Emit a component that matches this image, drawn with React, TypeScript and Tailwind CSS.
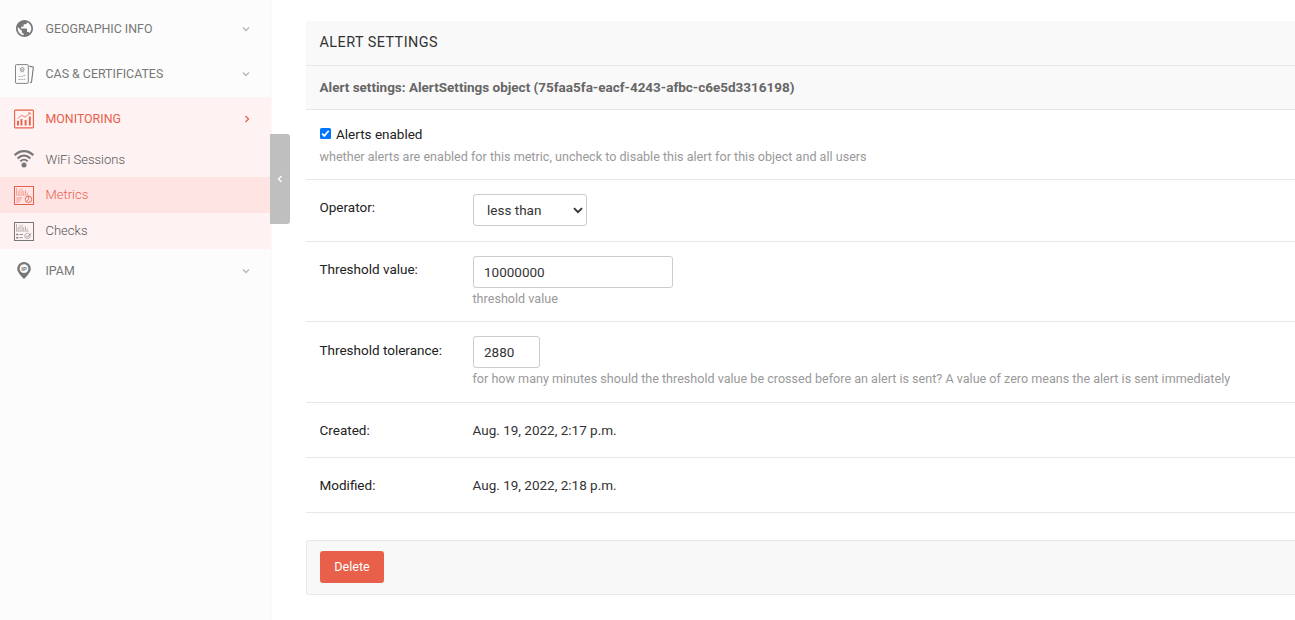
import type { ReactNode } from 'react';

function GlobeIcon() {
  return (
    <svg viewBox="2 2 20 20" className="h-[17px] w-[17px]" fill="currentColor">
      <path d="M12 2C6.48 2 2 6.48 2 12s4.48 10 10 10 10-4.48 10-10S17.52 2 12 2zm-1 17.93c-3.95-.49-7-3.85-7-7.93 0-.62.08-1.21.21-1.79L9 15v1c0 1.1.9 2 2 2v1.93zm6.9-2.54c-.26-.81-1-1.39-1.9-1.39h-1v-3c0-.55-.45-1-1-1H8v-2h2c.55 0 1-.45 1-1V7h2c1.1 0 2-.9 2-2v-.41c2.93 1.19 5 4.06 5 7.41 0 2.08-.8 3.97-2.1 5.39z" />
    </svg>
  );
}

function CertificateIcon() {
  return (
    <svg viewBox="0 0 20 20" className="h-5 w-5" fill="none" stroke="currentColor">
      <rect x="1.5" y="0.6" width="12.8" height="18.8" rx="1" strokeWidth="0.9" />
      <path d="M15.4 2.4l3.4.4a.6.6 0 0 1 .5.7L17.5 18.2l-1.6.3" strokeWidth="1.1" />
      <circle cx="8.2" cy="5.4" r="1.9" strokeWidth="0.8" />
      <path d="M7.4 5.3l.7.7 1.1-1.2M7.2 7.3v1M9.2 7.3v1" strokeWidth="0.6" />
      <path d="M4.5 12.4h1.3M6.5 12.4h2.2M9.2 11.4h2M4.5 15.5h2M7.3 15.5h1.5M9.5 15.3h1.8" strokeWidth="0.9" opacity="0.7" />
    </svg>
  );
}

function MonitoringIcon() {
  return (
    <svg viewBox="0 0 20 20" className="h-5 w-5" fill="none" stroke="currentColor">
      <rect x="0.6" y="1.1" width="18.8" height="17.8" rx="1" strokeWidth="1.1" />
      <path d="M4 16.5v-4.7M7.4 16.5v-6.5M11.6 16.5v-5.5M15.8 16.5v-9" strokeWidth="1.9" />
      <path d="M3.6 9.6l3.9-3.4 3.7 1.9 4.6-4" strokeWidth="0.8" />
      <path d="M14.3 3.8h1.9v1.9" strokeWidth="0.8" />
    </svg>
  );
}

function WifiIcon() {
  return (
    <svg viewBox="0 0 20 20" className="h-5 w-5" fill="none" stroke="currentColor">
      <path d="M0.7 6.2C6 .7 14 .7 19.3 6.2" strokeWidth="2.2" />
      <path d="M3.6 9.4c3.8-3.9 9-3.9 12.8 0" strokeWidth="2.1" />
      <path d="M6.3 12.4c2.2-2.2 5.2-2.2 7.4 0" strokeWidth="2" />
      <circle cx="10" cy="16.1" r="2.5" fill="currentColor" stroke="none" />
    </svg>
  );
}

function PanelIcon({ checks = false }: { checks?: boolean }) {
  return (
    <svg viewBox="0 0 20 20" className="h-5 w-5" fill="none" stroke="currentColor">
      <rect x="0.5" y="1.5" width="19" height="18" strokeWidth="1" />
      <path d="M2.5 3v7M4.3 6v4M6 4v6M8 3.5v6.5M9.7 6v4M11.5 5v5M13.2 7.5v2.5" strokeWidth="0.8" opacity="0.6" />
      <path d="M2 10.4h13" strokeWidth="0.6" opacity="0.5" />
      {checks ? (
        <>
          <path d="M2.3 13.5h2M2.3 16.7h2" strokeWidth="1.5" />
          <path d="M5.5 13.5h3.5M5.5 16.7h3" strokeWidth="0.8" />
          <circle cx="13.4" cy="15" r="2.7" strokeWidth="0.7" opacity="0.7" />
          <path d="M12 14.8l1.3 1.3 4-3.6" strokeWidth="0.8" />
        </>
      ) : (
        <>
          <path d="M2.3 13h6M2.3 15h4.6M2.3 17h3" strokeWidth="0.9" opacity="0.7" />
          <circle cx="14.5" cy="14.3" r="3.2" strokeWidth="0.9" />
          <path d="M14.5 11.3v3.1l-1.8 2.2" strokeWidth="0.8" />
        </>
      )}
    </svg>
  );
}

function PinIcon() {
  return (
    <svg viewBox="0 0 14 17" className="h-[17px] w-[14px]">
      <path d="M7 0a6.8 6.8 0 0 0-6.8 6.8C.2 11 7 17 7 17s6.8-6 6.8-10.2A6.8 6.8 0 0 0 7 0z" fill="currentColor" />
      <circle cx="7" cy="6.7" r="4.4" fill="#fcfcfc" />
      <text x="7" y="8.9" textAnchor="middle" fontSize="6" fontWeight="700" fill="currentColor">IP</text>
    </svg>
  );
}

function Chevron({ className }: { className: string }) {
  return (
    <svg viewBox="0 0 8 8" className={className} fill="none" stroke="currentColor" strokeWidth="1.3">
      <path d="M1 2.5l3 3 3-3" />
    </svg>
  );
}

function MenuRow({ icon, label, className, labelClass = 'pt-px', chevron }: { icon: ReactNode; label: string; className: string; labelClass?: string; chevron?: ReactNode }) {
  return (
    <div className={`flex items-center pl-3.5 pr-[21px] ${className}`}>
      <span className="flex w-5 shrink-0 justify-center">{icon}</span>
      <span className={`ml-[11.5px] flex-1 whitespace-nowrap ${labelClass}`}>{label}</span>
      {chevron}
    </div>
  );
}

function Row({ label, className, labelClass = 'pt-[17px]', children }: { label: string; className: string; labelClass?: string; children: ReactNode }) {
  return (
    <div className={`flex border-b border-[#e8e8e8] pl-[13.5px] ${className}`}>
      <div className={`w-[153px] shrink-0 leading-5 text-[#222] ${labelClass}`}>{label}</div>
      <div className="whitespace-nowrap">{children}</div>
    </div>
  );
}

export default function App() {
  return (
    <div className="relative flex h-[620px] w-full overflow-hidden bg-white font-['Roboto',sans-serif] text-[13.5px] text-[#333]">
      <nav className="w-[272px] shrink-0 border-r border-[#f9f9f9] bg-[#fcfcfc] text-[13px] text-[#777] opacity-[.999]">
        <MenuRow className="mt-1.5 h-[45px] text-[12.4px]" icon={<GlobeIcon />} label="GEOGRAPHIC INFO" chevron={<Chevron className="h-2 w-2 text-[#b5b5b5]" />} />
        <MenuRow className="h-[45px] text-[12.4px]" icon={<CertificateIcon />} label="CAS & CERTIFICATES" chevron={<Chevron className="h-2 w-2 text-[#b5b5b5]" />} />
        <div className="mt-px h-[152px] w-[271px] bg-[#fff2f2]">
          <MenuRow className="h-[43px] text-[12.4px] text-[#e8604a]" icon={<MonitoringIcon />} label="MONITORING" chevron={<Chevron className="h-2 w-2 translate-x-px -rotate-90" />} />
          <MenuRow className="h-[37px] font-light" labelClass="pt-0.5 text-[#555]" icon={<WifiIcon />} label="WiFi Sessions" />
          <MenuRow className="h-9 bg-[#ffe4e4] font-light text-[#e8604a]" labelClass="pb-px" icon={<PanelIcon />} label="Metrics" />
          <MenuRow className="h-9 font-light" labelClass="pb-px text-[#555]" icon={<PanelIcon checks />} label="Checks" />
        </div>
        <MenuRow className="h-[43px] text-[12.4px]" icon={<PinIcon />} label="IPAM" chevron={<Chevron className="h-2 w-2 text-[#b5b5b5]" />} />
      </nav>
      <button className="absolute left-[270px] top-[134px] flex h-[90px] w-5 items-center justify-center rounded-r-[3px] bg-[#bfbfbf] text-white">
        <Chevron className="h-2 w-2 rotate-90" />
      </button>

      <main className="ml-[34px] min-w-0 flex-1 pt-[21px]">
        <h2 className="h-[45px] border-b border-[#e8e8e8] bg-[#f9f9f9] pl-[13.5px] text-[14.4px] leading-[44px] tracking-[0.45px]">ALERT SETTINGS</h2>
        <h3 className="h-11 border-b border-[#e8e8e8] bg-[#f9f9f9] pl-[13.5px] text-[13.5px] font-bold leading-[43px] text-[#666]">Alert settings: AlertSettings object (75faa5fa-eacf-4243-afbc-c6e5d3316198)</h3>
        <div className="h-[70px] border-b border-[#e8e8e8] pl-[13.5px] pt-3.5">
          <label className="flex h-5 items-center text-[#222]">
            <span className="mb-px mr-[5px] ml-[.5px] flex h-[11px] w-[11px] items-center justify-center rounded-[1.5px] bg-[#0075ff]">
              <svg viewBox="0 0 11 11" className="h-[11px] w-[11px]" fill="none" stroke="white" strokeWidth="1.7"><path d="M2.1 5.7l2.2 2.2 4.4-5.2" /></svg>
            </span>
            <span className="pt-px">Alerts enabled</span>
          </label>
          <p className="mt-[3px] text-[12.6px] leading-5 text-[#999]">whether alerts are enabled for this metric, uncheck to disable this alert for this object and all users</p>
        </div>
        <Row className="h-[62px]" label="Operator:">
          <div className="mt-3.5 ml-[.5px] flex h-8 w-[114px] items-center justify-between rounded-[3px] border border-[#ccc] pl-[13px] pr-[3px]">
            <span className="pt-px">less than</span>
            <svg viewBox="0 0 10 7" className="h-[7px] w-[10px]" fill="none" stroke="#333" strokeWidth="1.9"><path d="M1 1.2l4 4 4-4" /></svg>
          </div>
        </Row>
        <Row className="h-20" label="Threshold value:">
          <div className="mt-3.5 ml-[.5px] flex h-8 w-[200px] items-center rounded-[3px] border border-[#ccc] pl-[10px] pt-px">10000000</div>
          <p className="mt-px text-[12.6px] leading-5 text-[#999]">threshold value</p>
        </Row>
        <Row className="h-[81px]" labelClass="pt-[18px]" label="Threshold tolerance:">
          <div className="mt-3.5 ml-[.5px] flex h-8 w-[67px] items-center rounded-[3px] border border-[#ccc] pl-[10px] pt-px">2880</div>
          <p className="mt-px text-[12.595px] leading-5 text-[#999]">for how many minutes should the threshold value be crossed before an alert is sent? A value of zero means the alert is sent immediately</p>
        </Row>
        <Row className="h-[55px]" label="Created:"><div className="pt-[17px] leading-5">Aug. 19, 2022, 2:17 p.m.</div></Row>
        <Row className="h-[55px]" label="Modified:"><div className="pt-[17px] leading-5">Aug. 19, 2022, 2:18 p.m.</div></Row>
        <div className="mt-[27px] flex h-[55px] items-start rounded-l-[3px] border-y border-l border-[#e8e8e8] bg-[#f8f8f8] pl-[13px] pt-2.5">
          <button className="h-8 w-16 rounded-[3px] bg-[#e8604a] text-[12.6px] text-white">Delete</button>
        </div>
      </main>
    </div>
  );
}
